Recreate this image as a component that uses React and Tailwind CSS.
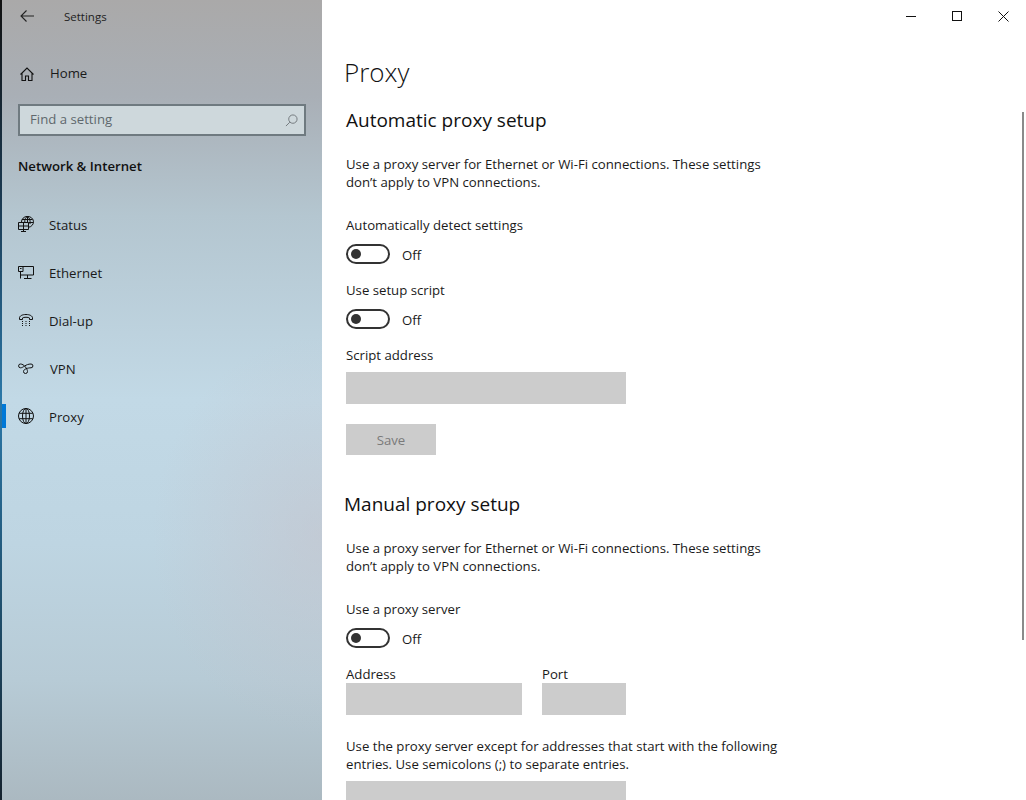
import React from "react";

const font = "font-['Open_Sans','Noto_Sans',sans-serif]";

function BackIcon() {
  return (
    <svg width="14" height="12" viewBox="0 0 14 12" fill="none" stroke="#222" strokeWidth="1.1">
      <path d="M6.500.500L1 6l5.500 5.500M1 6h13" />
    </svg>
  );
}

function HomeIcon() {
  return (
    <svg width="14" height="14" viewBox="0 0 14 14" fill="none" stroke="#111" strokeWidth="1.1">
      <path d="M.5 7.500L7 1l6.500 6.500M2 6.500v7h3.500V9h3v4.500H12v-7" />
    </svg>
  );
}

function SearchIcon() {
  return (
    <svg width="13" height="13" viewBox="0 0 14 14" fill="none" stroke="#6f7579" strokeWidth="1">
      <circle cx="8.500" cy="5.500" r="4.500" />
      <path d="M5.200 8.800L1 13" />
    </svg>
  );
}

function StatusIcon() {
  return (
    <svg width="16" height="16" viewBox="0 0 16 16" fill="none" stroke="#111" strokeWidth="1">
      <path d="M3.500 6A6 5.500 0 1 1 10.500 11.300M9.500.5V6M4 3.500h10.500M10.500 6.500h4.500M6.800 6C6.500 3.500 7.500 1.500 9.500.5c2 1.200 3 3.500 2.500 7.500" />
      <path d="M.5 6.500h10v7H.5zM5.500 6.500v7M.5 10h10M5.500 13.500v2M3 15.500h5" />
    </svg>
  );
}

function EthernetIcon() {
  return (
    <svg width="16" height="13" viewBox="0 0 16 13" fill="none" stroke="#111" strokeWidth="1">
      <path d="M5 .5H15.500V9H3M9.500 9v3.500M6 12.500h7.500" />
      <path d="M.5.500h4.500v5H.5zM2.500 5.500v7" />
      <path d="M2 2.500h1.500" />
    </svg>
  );
}

function DialIcon() {
  return (
    <svg width="14" height="12" viewBox="0 0 14 12" fill="none" stroke="#111" strokeWidth="1">
      <path d="M.5 5.500V4C.5 2 3 .5 7 .5s6.500 1.500 6.500 3.500v1.500h-3V4C9.500 3 4.500 3 3.500 4v1.500z" />
      <path d="M3 7.500h1M6.500 7.500h1M10 7.500h1M3 9.500h1M6.500 9.500h1M10 9.500h1M3 11.500h1M6.500 11.500h1M10 11.500h1" />
    </svg>
  );
}

function VpnIcon() {
  return (
    <svg width="16" height="11" viewBox="0 0 16 11" fill="none" stroke="#111" strokeWidth="1">
      <path d="M2.500 4.800C5.500 4.800 7.500 1 13 1A1.900 1.900 0 1 1 13 4.800C10 4.800 5.500 6 5.500 8.500A2 2 0 0 0 9.500 8.500C9.500 6 6 1 2.500 1A1.900 1.900 0 1 0 2.500 4.800z" />
    </svg>
  );
}

function GlobeIcon() {
  return (
    <svg width="16" height="16" viewBox="0 0 16 16" fill="none" stroke="#111" strokeWidth="1">
      <circle cx="8" cy="8" r="7.500" />
      <ellipse cx="8" cy="8" rx="3.500" ry="7.500" />
      <path d="M8 .5v15M1.200 5.300h13.600M1.200 10.700h13.600" />
    </svg>
  );
}

function NavItem({ icon, label, active, labelClass = "ml-[15px]" }) {
  return (
    <div className="relative flex h-12 items-center pl-[16px] text-[13.2px] text-[#1a1a1a]">
      {active && <div className="absolute left-0 top-3 h-6 w-1 bg-[#0078d7]" />}
      <div className="flex w-4 items-center justify-center">{icon}</div>
      <span className={`pt-1 ${labelClass}`}>{label}</span>
    </div>
  );
}

function Toggle({ className = "" }) {
  return (
    <div className={`flex items-center ${className}`}>
      <div className="flex h-5 w-11 -translate-y-px items-center rounded-full border-2 border-[#333] pl-[3px]">
        <div className="h-2.5 w-2.5 rounded-full bg-[#333]" />
      </div>
      <span className="ml-3 text-[13.2px] leading-5 text-[#1a1a1a]">Off</span>
    </div>
  );
}

function Label({ children, className = "" }) {
  return <div className={`text-[13.2px] leading-5 text-[#1a1a1a] ${className}`}>{children}</div>;
}

function Heading({ children, className = "" }) {
  return <h2 className={`text-[19px] leading-7 text-[#111] ${className}`}>{children}</h2>;
}

export default function App() {
  return (
    <div className={`relative flex h-[800px] w-[1026px] overflow-hidden bg-white ${font}`}>
      <div className="h-full w-0.5 shrink-0 bg-[linear-gradient(180deg,#111_0%,#1b3a52_25%,#2c78a8_50%,#20516f_75%,#14222e_100%)]" />

      <aside className="h-full w-[320px] shrink-0 bg-[radial-gradient(ellipse_170px_200px_at_100%_67%,rgba(198,192,200,0.5),rgba(198,192,200,0)),linear-gradient(180deg,#aaa9a9_0%,#a9afb6_12%,#b4c6d0_27%,#c2d9e6_50%,#bed5e2_68%,#b7cbd6_85%,#abb9c1_100%)]">
        <div className="flex h-8 items-center pl-[18px]">
          <BackIcon />
          <span className="ml-[30px] pt-0.5 text-[11.5px] text-[#222]">Settings</span>
        </div>
        <div className="mt-[18px] flex h-12 items-center pl-[18px] text-[13.2px] text-[#1a1a1a]">
          <HomeIcon />
          <span className="ml-4">Home</span>
        </div>
        <div className="ml-4 mt-1.5 flex h-8 w-[288px] items-center justify-between border-2 border-[#6f7a80] bg-[#ced8dc] pl-[10px] pr-[6px]">
          <span className="-mt-0.5 text-[13.2px] leading-5 text-[#5f686d]">Find a setting</span>
          <SearchIcon />
        </div>
        <div className="ml-4 mt-5 text-[13.2px] font-semibold leading-5 text-[#111]">Network &amp; Internet</div>
        <div className="mt-6">
          <NavItem icon={<StatusIcon />} label="Status" />
          <NavItem icon={<EthernetIcon />} label="Ethernet" />
          <NavItem icon={<DialIcon />} label="Dial-up" />
          <NavItem icon={<VpnIcon />} label="VPN" labelClass="ml-4" />
          <NavItem icon={<GlobeIcon />} label="Proxy" active />
        </div>
      </aside>

      <main className="flex-1 pl-[22px]">
        <h1 className="mt-[52px] text-[26px] font-light leading-10 text-[#111]">Proxy</h1>
        <Heading className="ml-0.5 mt-3.5">Automatic proxy setup</Heading>
        <p className="ml-0.5 mt-[21px] w-[430px] text-[13.2px] leading-[18px] text-[#1a1a1a]">
          Use a proxy server for Ethernet or Wi-Fi connections. These settings don’t apply to VPN connections.
        </p>
        <Label className="ml-0.5 mt-[24px]">Automatically detect settings</Label>
        <Toggle className="ml-0.5 mt-[10px]" />
        <Label className="ml-0.5 mt-[15px]">Use setup script</Label>
        <Toggle className="ml-0.5 mt-[10px]" />
        <Label className="ml-0.5 mt-[15px]">Script address</Label>
        <div className="ml-0.5 mt-[7px] h-8 w-[280px] bg-[#cccccc]" />
        <div className="ml-0.5 mt-5 flex h-[31px] w-[90px] items-center justify-center bg-[#cccccc] pt-0.5 text-[13.2px] text-[#7a7a7a]">Save</div>

        <Heading className="mt-[35px]">Manual proxy setup</Heading>
        <p className="ml-0.5 mt-[21px] w-[430px] text-[13.2px] leading-[18px] text-[#1a1a1a]">
          Use a proxy server for Ethernet or Wi-Fi connections. These settings don’t apply to VPN connections.
        </p>
        <Label className="ml-0.5 mt-[24px]">Use a proxy server</Label>
        <Toggle className="ml-0.5 mt-[10px]" />
        <div className="ml-0.5 mt-[15px] flex gap-5">
          <div>
            <Label className="h-[19px]">Address</Label>
            <div className="h-8 w-[176px] bg-[#cccccc]" />
          </div>
          <div>
            <Label className="h-[19px]">Port</Label>
            <div className="h-8 w-[84px] bg-[#cccccc]" />
          </div>
        </div>
        <p className="ml-0.5 mt-[22px] w-[445px] text-[13.2px] leading-[18px] text-[#1a1a1a]">
          Use the proxy server except for addresses that start with the following entries. Use semicolons (;) to separate entries.
        </p>
        <div className="ml-0.5 mt-[8px] h-8 w-[280px] bg-[#cccccc]" />
      </main>

      {/* window buttons */}
      <div className="absolute right-0 top-0 flex h-8 items-center">
        <div className="flex w-[46px] justify-center">
          <div className="h-px w-2.5 bg-[#111]" />
        </div>
        <div className="flex w-[46px] justify-center">
          <div className="h-2.5 w-2.5 border border-[#111]" />
        </div>
        <div className="flex w-[46px] justify-center">
          <svg width="11" height="11" viewBox="0 0 11 11" stroke="#111" strokeWidth="1" fill="none">
            <path d="M.5.500l10 10M10.500.500l-10 10" />
          </svg>
        </div>
      </div>

      <div className="absolute left-[1022px] top-[112px] h-[528px] w-0.5 bg-[#8a8a8a]" />
    </div>
  );
}
